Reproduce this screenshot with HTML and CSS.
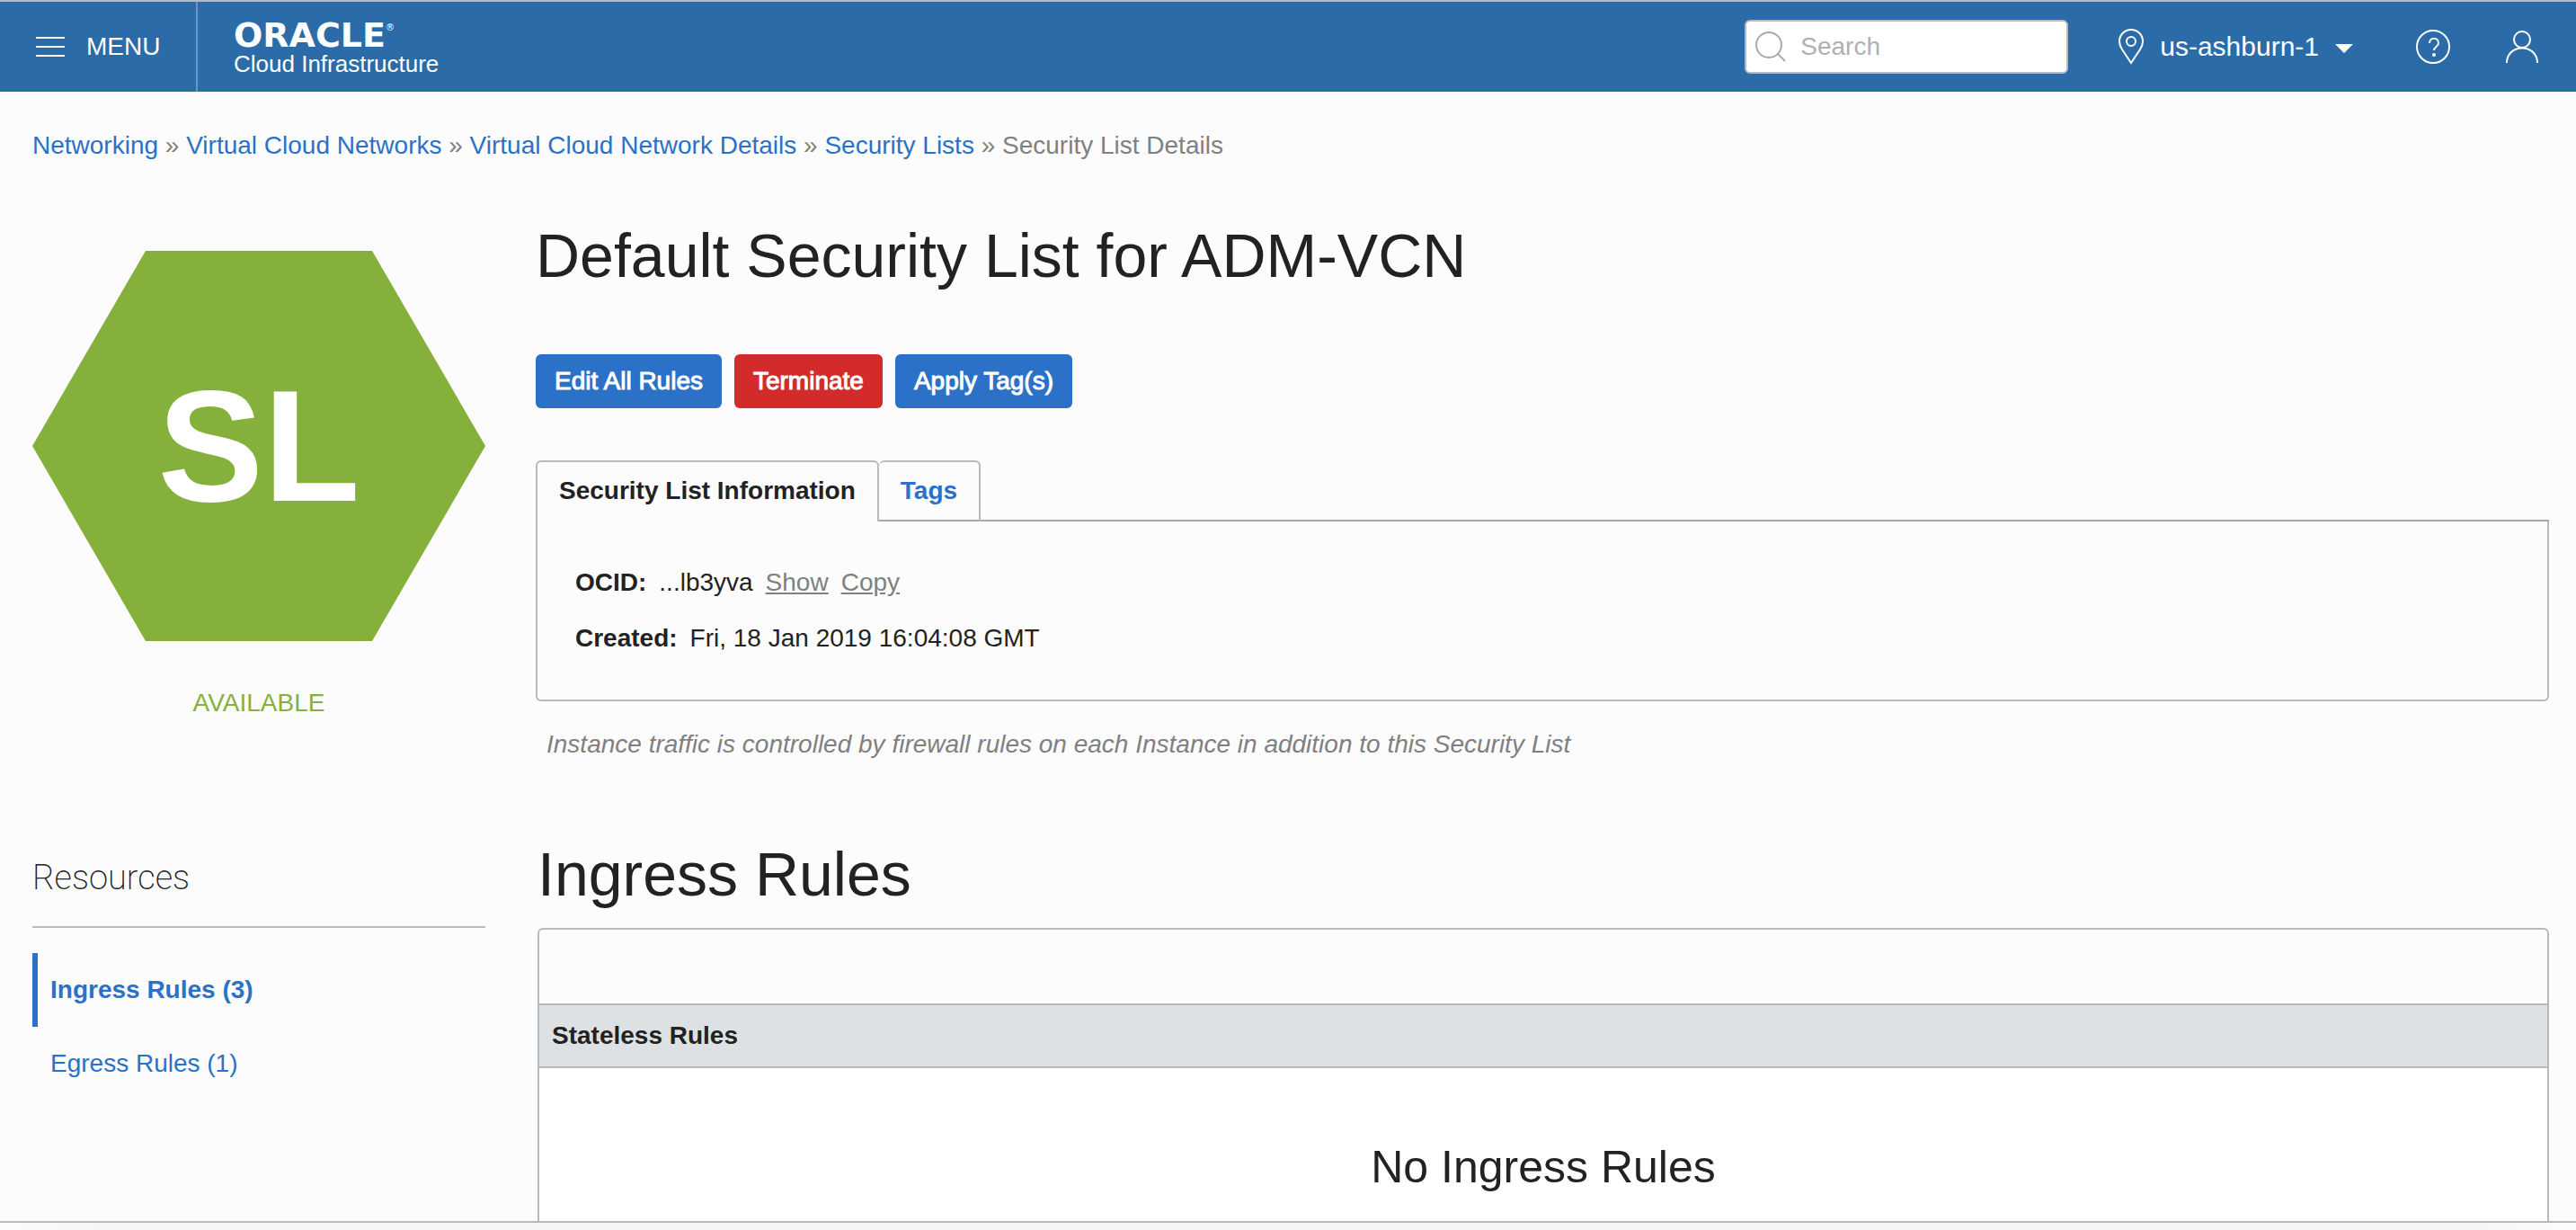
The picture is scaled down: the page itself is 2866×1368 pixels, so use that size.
FILE: index.html
```html
<!DOCTYPE html>
<html lang="en">
<head>
<meta charset="utf-8">
<title>Security List Details</title>
<link rel="stylesheet" href="styles.css">
</head>
<body>
<header class="topbar">
  <button class="menu" type="button">
    <svg width="32" height="22" viewBox="0 0 32 22" aria-hidden="true"><path d="M0 1h32M0 11h32M0 21h32" stroke="#fff" stroke-width="2"/></svg>
    <span>MENU</span>
  </button>
  <a class="brand" href="#">
    <span class="brand-name">ORACLE<span class="brand-mark">®</span></span>
    <span class="brand-sub">Cloud Infrastructure</span>
  </a>
  <div class="tools">
    <label class="search">
      <svg width="34" height="34" viewBox="0 0 34 34" fill="none" stroke="#aaa" stroke-width="2" aria-hidden="true"><circle cx="15" cy="15" r="14"/><path d="M25 25l8 8"/></svg>
      <input type="search" placeholder="Search" aria-label="Search">
    </label>
    <button class="region" type="button">
      <svg width="28" height="40" viewBox="0 0 28 40" fill="none" stroke="#fff" stroke-width="2" aria-hidden="true"><path d="M14 38L4 23C2 20 1 17 1 14a13 13 0 0 1 26 0c0 3-1 6-3 9z"/><circle cx="14" cy="14" r="5"/></svg>
      <span>us-ashburn-1</span>
      <svg class="caret" width="20" height="10" viewBox="0 0 20 10" aria-hidden="true"><path d="M0 0h20L10 10z" fill="#fff"/></svg>
    </button>
    <button class="icon-button" type="button" aria-label="Help">
      <svg width="38" height="38" viewBox="0 0 38 38" fill="none" stroke="#fff" stroke-width="2" aria-hidden="true"><circle cx="19" cy="19" r="18"/><path d="M15 15c0-7 10-7 10 0 0 4-5 4-5 8"/><circle cx="20" cy="28" r="1" fill="#fff"/></svg>
    </button>
    <button class="icon-button" type="button" aria-label="Profile">
      <svg width="36" height="36" viewBox="0 0 36 36" fill="none" stroke="#fff" stroke-width="2" aria-hidden="true"><circle cx="18" cy="10" r="9"/><path d="M1 36C1 14 35 14 35 36"/></svg>
    </button>
  </div>
</header>

<nav class="crumbs" aria-label="Breadcrumb">
  <a href="#">Networking</a> » <a href="#">Virtual Cloud Networks</a> » <a href="#">Virtual Cloud Network Details</a> » <a href="#">Security Lists</a> » <span>Security List Details</span>
</nav>

<main class="page">
  <aside class="side">
    <div class="hexagon">SL</div>
    <p class="status">AVAILABLE</p>
    <h2 class="side-title">Resources</h2>
    <nav class="resources" aria-label="Resources">
      <a class="resource active" href="#">Ingress Rules (3)</a>
      <a class="resource" href="#">Egress Rules (1)</a>
    </nav>
  </aside>

  <div class="content">
    <h1 class="title">Default Security List for ADM-VCN</h1>
    <div class="actions">
      <button class="btn" type="button">Edit All Rules</button>
      <button class="btn danger" type="button">Terminate</button>
      <button class="btn" type="button">Apply Tag(s)</button>
    </div>
    <div class="tabs" role="tablist">
      <button class="tab selected" type="button" role="tab" aria-selected="true">Security List Information</button>
      <button class="tab" type="button" role="tab" aria-selected="false">Tags</button>
    </div>
    <dl class="info">
      <div class="row"><dt>OCID:</dt><dd>...lb3yva</dd><dd><a href="#">Show</a></dd><dd><a href="#">Copy</a></dd></div>
      <div class="row"><dt>Created:</dt><dd>Fri, 18 Jan 2019 16:04:08 GMT</dd></div>
    </dl>
    <p class="note">Instance traffic is controlled by firewall rules on each Instance in addition to this Security List</p>

    <h2 class="title rules-title">Ingress Rules</h2>
    <section class="rules">
      <div class="rules-toolbar"></div>
      <h3 class="rules-group">Stateless Rules</h3>
      <p class="rules-empty">No Ingress Rules</p>
    </section>
  </div>
</main>
<footer class="bottom"></footer>
</body>
</html>
```
FILE: styles.css
```css
* { box-sizing: border-box; }

body {
  margin: 0;
  height: 100vh;
  display: flex;
  flex-direction: column;
  overflow: hidden;
  background: #fcfcfc;
  color: #222;
  font: 28px/32px "Liberation Sans", Arial, sans-serif;
}

h1, h2, h3, p, dl, dd { margin: 0; }
a { color: #2b71c7; text-decoration: none; }
button { font: inherit; color: inherit; background: none; border: 0; padding: 0; }
svg { display: block; flex: none; }

/* Top bar */
.topbar {
  flex: none;
  display: flex;
  height: 102px;
  border-top: 2px solid #b4babf;
  background: #2a6ba8;
  color: #fff;
}
.menu {
  display: flex;
  align-items: center;
  gap: 24px;
  width: 220px;
  padding-left: 40px;
  border-right: 2px solid #6a97c2;
}
.brand {
  display: flex;
  flex-direction: column;
  justify-content: center;
  padding: 6px 0 0 40px;
  color: #fff;
}
.brand-name {
  display: flex;
  font: bold 38px/32px "DejaVu Sans", sans-serif;
}
.brand-mark { font-size: 10px; line-height: 16px; font-weight: normal; }
.brand-sub { font-size: 26px; line-height: 32px; }
.tools {
  display: flex;
  align-items: center;
  margin-left: auto;
  padding-right: 42px;
}
.search {
  display: flex;
  align-items: center;
  gap: 16px;
  width: 360px;
  height: 60px;
  padding: 0 10px;
  background: #fff;
  border: 2px solid #b4babf;
  border-radius: 6px;
}
.search input {
  flex: 1;
  min-width: 0;
  padding: 0;
  border: 0;
  outline: 0;
  font: inherit;
  background: none;
}
.search input::placeholder { color: #b0b0b0; }
.region {
  display: flex;
  align-items: center;
  gap: 18px;
  margin: 0 70px 0 56px;
  font-size: 30px;
}
.caret { margin-top: 4px; }
.icon-button + .icon-button { margin-left: 62px; }

/* Breadcrumb */
.crumbs { flex: none; padding: 44px 36px 0; color: #808080; }

/* Page columns */
.page {
  flex: 1;
  min-height: 0;
  overflow: hidden;
  display: flex;
  gap: 56px;
  padding: 0 30px 0 36px;
}
.side { flex: none; width: 504px; padding-top: 101px; }
.content { flex: 1; min-width: 0; padding-top: 66px; }

.hexagon {
  display: flex;
  align-items: center;
  justify-content: center;
  height: 434px;
  background: #84b03b;
  color: #fff;
  font-size: 176px;
  font-weight: bold;
  clip-path: polygon(25% 0, 75% 0, 100% 50%, 75% 100%, 25% 100%, 0 50%);
}
.status { margin-top: 53px; text-align: center; color: #84b03b; }
.side-title {
  margin-top: 150px;
  padding-bottom: 26px;
  border-bottom: 2px solid #b4babf;
  font: 200 38px/56px Roboto, sans-serif;
}
.resources { display: flex; flex-direction: column; margin-top: 28px; }
.resource { padding: 25px 14px; border-left: 6px solid transparent; }
.resource.active { border-color: #2b71c7; font-weight: bold; }

.title { font-size: 68px; line-height: 80px; font-weight: normal; }
.actions { display: flex; gap: 14px; margin-top: 70px; }
.btn {
  height: 60px;
  padding: 0 21px;
  border-radius: 6px;
  background: #2b71c7;
  color: #fff;
  -webkit-text-stroke: 1px #fff;
}
.btn.danger { background: #d32b2b; }

.tabs { display: flex; margin-top: 58px; }
.tab {
  height: 68px;
  padding: 0 24px;
  border: 2px solid #b4babf;
  border-left: 0;
  border-bottom-color: #a8a8a8;
  border-radius: 6px 6px 0 0;
  color: #2b71c7;
  font-weight: bold;
}
.tab.selected {
  padding-bottom: 2px;
  border-left: 2px solid #b4babf;
  border-bottom: 0;
  color: #222;
}
.tabs::after { content: ""; flex: 1; border-bottom: 2px solid #a8a8a8; }
.info {
  padding: 52px 42px;
  border: 2px solid #b4babf;
  border-top: 0;
  border-radius: 0 0 6px 6px;
}
.row { display: flex; gap: 14px; }
.row + .row { margin-top: 30px; }
.row dt { font-weight: bold; }
.row a { color: #808080; text-decoration: underline; }
.note { margin-top: 32px; padding-left: 12px; font-style: italic; color: #808080; }

.rules-title { margin-top: 88px; padding-left: 2px; }
.rules {
  margin: 20px 0 0 2px;
  border: 2px solid #b4babf;
  border-radius: 6px 6px 0 0;
}
.rules-toolbar { height: 82px; }
.rules-group {
  padding: 18px 14px;
  border: solid #b4babf;
  border-width: 2px 0;
  background: #dee1e4;
  font-size: 28px;
}
.rules-empty {
  padding: 78px 0;
  background: #fff;
  text-align: center;
  font-size: 50px;
  line-height: 64px;
}

.bottom {
  flex: none;
  height: 10px;
  border-top: 2px solid #b4babf;
  background: linear-gradient(90deg, #fcfcfc, #f5f5f5 120px, #f5f5f5 calc(100% - 120px), #fcfcfc);
}
```
